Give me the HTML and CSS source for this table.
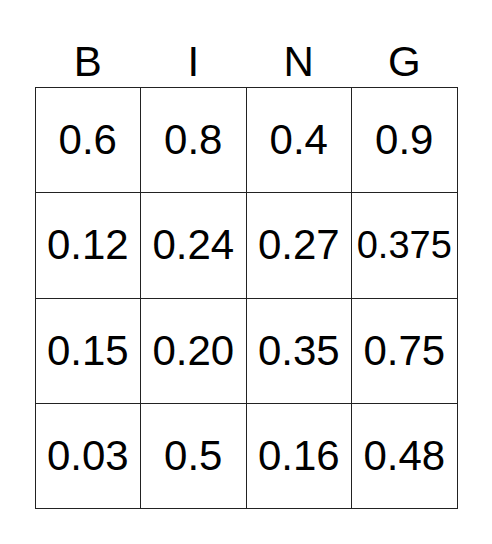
FILE: index.html
```html
<!DOCTYPE html>
<html>
<head>
<meta charset="utf-8">
<link rel="stylesheet" href="styles.css">
</head>
<body>
<div class="card">
  <div class="header">
    <div>B</div><div>I</div><div>N</div><div>G</div>
  </div>
  <div class="grid">
    <div class="cell">0.6</div><div class="cell">0.8</div><div class="cell">0.4</div><div class="cell">0.9</div>
    <div class="cell">0.12</div><div class="cell">0.24</div><div class="cell">0.27</div><div class="cell small">0.375</div>
    <div class="cell">0.15</div><div class="cell">0.20</div><div class="cell">0.35</div><div class="cell">0.75</div>
    <div class="cell">0.03</div><div class="cell">0.5</div><div class="cell">0.16</div><div class="cell">0.48</div>
  </div>
</div>
</body>
</html>
```
FILE: styles.css
```css
html, body {
  margin: 0;
  padding: 0;
  background: #fff;
}
body {
  font-family: "Liberation Sans", Arial, sans-serif;
  color: #000;
}
.card {
  width: 423px;
  margin: 0 auto;
  padding-top: 41px;
}
.header {
  display: grid;
  grid-template-columns: repeat(4, 1fr);
  font-size: 42px;
  line-height: 42px;
  text-align: center;
  margin-bottom: 4px;
  padding: 0 1px;
  column-gap: 1px;
}
.grid {
  display: grid;
  grid-template-columns: repeat(4, 1fr);
  grid-auto-rows: 104.25px;
  gap: 1px;
  padding: 1px;
  background: #222;
}
.cell {
  background: #fff;
  display: flex;
  align-items: center;
  justify-content: center;
  font-size: 42px;
}
.cell.small {
  font-size: 38px;
}
```
